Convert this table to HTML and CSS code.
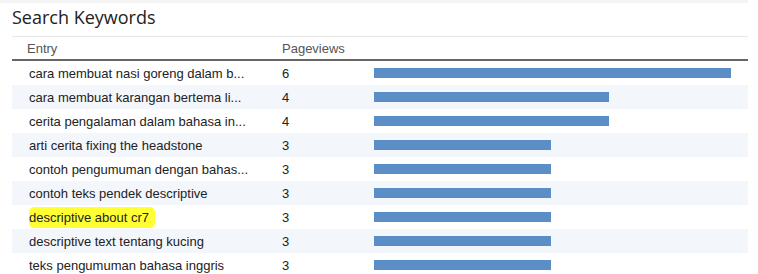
FILE: index.html
```html
<!DOCTYPE html>
<html>
<head>
<meta charset="utf-8">
<link rel="stylesheet" href="styles.css">
</head>
<body>
<div class="topband"></div>
<div class="widget">
  <h2 class="title">Search Keywords</h2>
  <div class="table">
    <div class="row head">
      <div class="c-entry">Entry</div>
      <div class="c-views">Pageviews</div>
      <div class="c-bar"></div>
    </div>
    <div class="row">
      <div class="c-entry">cara membuat nasi goreng dalam b...</div>
      <div class="c-views">6</div>
      <div class="c-bar"><span class="bar" style="width:357px"></span></div>
    </div>
    <div class="row alt">
      <div class="c-entry">cara membuat karangan bertema li...</div>
      <div class="c-views">4</div>
      <div class="c-bar"><span class="bar" style="width:235px"></span></div>
    </div>
    <div class="row">
      <div class="c-entry">cerita pengalaman dalam bahasa in...</div>
      <div class="c-views">4</div>
      <div class="c-bar"><span class="bar" style="width:235px"></span></div>
    </div>
    <div class="row alt">
      <div class="c-entry">arti cerita fixing the headstone</div>
      <div class="c-views">3</div>
      <div class="c-bar"><span class="bar" style="width:177px"></span></div>
    </div>
    <div class="row">
      <div class="c-entry">contoh pengumuman dengan bahas...</div>
      <div class="c-views">3</div>
      <div class="c-bar"><span class="bar" style="width:177px"></span></div>
    </div>
    <div class="row alt">
      <div class="c-entry">contoh teks pendek descriptive</div>
      <div class="c-views">3</div>
      <div class="c-bar"><span class="bar" style="width:177px"></span></div>
    </div>
    <div class="row">
      <div class="c-entry"><span class="hl">descriptive about cr7</span></div>
      <div class="c-views">3</div>
      <div class="c-bar"><span class="bar" style="width:177px"></span></div>
    </div>
    <div class="row alt">
      <div class="c-entry">descriptive text tentang kucing</div>
      <div class="c-views">3</div>
      <div class="c-bar"><span class="bar" style="width:177px"></span></div>
    </div>
    <div class="row">
      <div class="c-entry">teks pengumuman bahasa inggris</div>
      <div class="c-views">3</div>
      <div class="c-bar"><span class="bar" style="width:177px"></span></div>
    </div>
  </div>
</div>
</body>
</html>
```

FILE: styles.css
```css
html, body {
  margin: 0;
  padding: 0;
  background: #ffffff;
  overflow: hidden;
}
body {
  width: 758px;
  height: 274px;
  font-family: "Liberation Sans", Arial, sans-serif;
  color: #222222;
}
.topband {
  height: 3px;
  width: 748px;
  background: #f4f4f4;
}
.widget {
  width: 736px;
  margin-left: 12px;
}
.title {
  margin: 0;
  font-family: "Open Sans", sans-serif;
  font-weight: 400;
  font-size: 18px;
  line-height: 24px;
  padding-top: 2px;
  height: 31px;
  color: #222222;
  border-bottom: 1px solid #e6e6e6;
}
.table {
  display: flex;
  flex-direction: column;
}
.row {
  display: grid;
  grid-template-columns: 258px 92px 1fr;
  height: 24px;
  align-items: center;
  font-size: 13px;
}
.row.alt {
  background: #f3f6fb;
}
.row.head {
  height: 22px;
  color: #555555;
  border-bottom: 2px solid #666666;
}
.c-entry {
  padding-left: 17px;
  white-space: nowrap;
}
.row.head .c-entry {
  padding-left: 15px;
}
.c-views {
  padding-left: 12px;
}
.c-bar {
  padding-left: 12px;
  display: flex;
  align-items: center;
}
.bar {
  display: block;
  height: 10px;
  background: #5b8ec6;
}
.hl {
  background: #ffff33;
  padding: 3px 6px 3px 0;
  border-radius: 5px;
}
```
